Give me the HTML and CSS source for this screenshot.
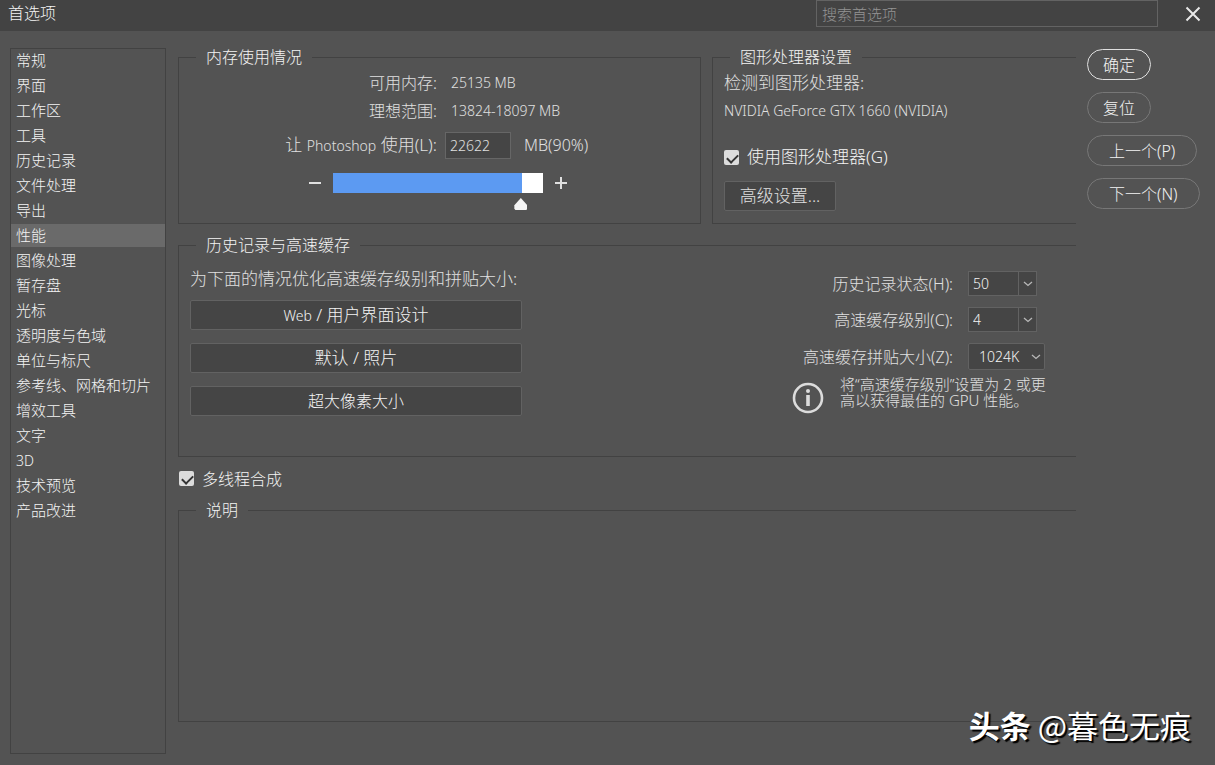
FILE: index.html
```html
<!DOCTYPE html>
<html lang="zh-CN">
<head>
    <meta charset="UTF-8">
    <meta name="viewport" content="width=device-width, initial-scale=1.0">
    <title>首选项</title>
    <link rel="stylesheet" href="styles.css">
</head>
<body>
    <div class="dialog">
        <header class="titlebar">
            <h1>首选项</h1>
            <input class="search" type="search" placeholder="搜索首选项" aria-label="搜索首选项">
            <button class="close" type="button" aria-label="关闭">
                <svg width="16" height="16" viewBox="0 0 16 16"><path d="M1.5 1.5l13 13M14.5 1.5l-13 13" stroke="#e8e8e8" stroke-width="2" fill="none"/></svg>
            </button>
        </header>

        <div class="content">
            <nav class="sidebar">
                <a href="#">常规</a>
                <a href="#">界面</a>
                <a href="#">工作区</a>
                <a href="#">工具</a>
                <a href="#">历史记录</a>
                <a href="#">文件处理</a>
                <a href="#">导出</a>
                <a href="#" class="active">性能</a>
                <a href="#">图像处理</a>
                <a href="#">暂存盘</a>
                <a href="#">光标</a>
                <a href="#">透明度与色域</a>
                <a href="#">单位与标尺</a>
                <a href="#">参考线、网格和切片</a>
                <a href="#">增效工具</a>
                <a href="#">文字</a>
                <a href="#"><span class="latin">3D</span></a>
                <a href="#">技术预览</a>
                <a href="#">产品改进</a>
            </nav>

            <main class="panel">
                <div class="top-row">
                    <fieldset class="group">
                        <legend>内存使用情况</legend>
                        <div class="memory">
                            <span class="label">可用内存:</span>
                            <span class="value">25135 MB</span>
                            <span class="label">理想范围:</span>
                            <span class="value">13824-18097 MB</span>
                            <label class="label wide" for="memory">让 <span class="latin">Photoshop</span> 使用(L):</label>
                            <div class="memory-use">
                                <input class="field" id="memory" type="text" value="22622">
                                <span>MB(90%)</span>
                            </div>
                        </div>
                        <div class="slider-row">
                            <button class="step" type="button" aria-label="减少">
                                <svg width="12" height="12" viewBox="0 0 12 12"><path d="M0 6h12" stroke="#e0e0e0" stroke-width="2"/></svg>
                            </button>
                            <input class="slider" type="range" min="0" max="24576" value="22622" aria-label="内存使用量">
                            <button class="step" type="button" aria-label="增加">
                                <svg width="12" height="12" viewBox="0 0 12 12"><path d="M0 6h12M6 0v12" stroke="#e0e0e0" stroke-width="2"/></svg>
                            </button>
                        </div>
                    </fieldset>

                    <fieldset class="group open">
                        <legend>图形处理器设置</legend>
                        <div class="gpu">
                            <p class="wide">检测到图形处理器:</p>
                            <p class="latin">NVIDIA GeForce GTX 1660 (NVIDIA)</p>
                            <label class="check wide"><input type="checkbox" checked>使用图形处理器(G)</label>
                            <button class="btn btn-advanced" type="button">高级设置...</button>
                        </div>
                    </fieldset>
                </div>

                <fieldset class="group open cache-group">
                    <legend>历史记录与高速缓存</legend>
                    <div class="cache">
                        <div class="presets">
                            <p class="wide">为下面的情况优化高速缓存级别和拼贴大小:</p>
                            <button class="btn" type="button"><span class="latin">Web</span> / 用户界面设计</button>
                            <button class="btn" type="button">默认 / 照片</button>
                            <button class="btn btn-narrow" type="button">超大像素大小</button>
                        </div>
                        <div class="cache-options">
                            <div class="options">
                                <label class="label" for="states">历史记录状态(H):</label>
                                <div class="combo">
                                    <input id="states" type="text" value="50">
                                    <button type="button" aria-label="展开">
                                        <svg width="10" height="6" viewBox="0 0 10 6"><path d="M1 1l4 3.5L9 1" stroke="#b8b8b8" stroke-width="1.3" fill="none"/></svg>
                                    </button>
                                </div>
                                <label class="label" for="levels">高速缓存级别(C):</label>
                                <div class="combo">
                                    <input id="levels" type="text" value="4">
                                    <button type="button" aria-label="展开">
                                        <svg width="10" height="6" viewBox="0 0 10 6"><path d="M1 1l4 3.5L9 1" stroke="#b8b8b8" stroke-width="1.3" fill="none"/></svg>
                                    </button>
                                </div>
                                <label class="label" for="tile">高速缓存拼贴大小(Z):</label>
                                <div class="select">
                                    <select id="tile">
                                        <option>1024K</option>
                                    </select>
                                    <svg width="10" height="6" viewBox="0 0 10 6"><path d="M1 1l4 3.5L9 1" stroke="#b8b8b8" stroke-width="1.3" fill="none"/></svg>
                                </div>
                            </div>
                            <div class="info">
                                <svg width="32" height="32" viewBox="0 0 32 32">
                                    <circle cx="16" cy="16" r="14" fill="none" stroke="#dcdcdc" stroke-width="2.6"/>
                                    <circle cx="16" cy="9" r="2" fill="#dcdcdc"/>
                                    <path d="M16 13v11" stroke="#dcdcdc" stroke-width="3.6"/>
                                </svg>
                                <p>将“高速缓存级别”设置为 2 或更高以获得最佳的 GPU 性能。</p>
                            </div>
                        </div>
                    </div>
                </fieldset>

                <label class="check threads"><input type="checkbox" checked>多线程合成</label>

                <fieldset class="group open description">
                    <legend>说明</legend>
                </fieldset>
            </main>

            <div class="actions">
                <button class="pill primary" type="button">确定</button>
                <button class="pill" type="button">复位</button>
                <button class="pill long" type="button">上一个(P)</button>
                <button class="pill long" type="button">下一个(N)</button>
            </div>
        </div>

        <div class="watermark"><strong>头条</strong> <span>@暮色无痕</span></div>
    </div>
</body>
</html>
```
FILE: styles.css
```css
* {
    margin: 0;
    padding: 0;
    box-sizing: border-box;
}

body {
    font-family: "Noto Sans", "Noto Sans CJK SC", sans-serif;
    font-size: 16px;
    font-weight: 300;
    line-height: 20px;
    color: #f4f4f4;
    background: #535353;
}

button,
input,
select {
    font: inherit;
    color: inherit;
}

svg {
    display: block;
}

.latin {
    font-size: 14px;
}

.wide {
    font-size: 17px;
}

.dialog {
    position: relative;
    display: flex;
    flex-direction: column;
    min-height: 100vh;
}

/* Title bar */
.titlebar {
    display: flex;
    align-items: flex-start;
    height: 31px;
    padding-left: 8px;
    background: #434343;
}

.titlebar h1 {
    flex: 1;
    font-size: 16px;
    font-weight: inherit;
    line-height: 27px;
}

.search {
    width: 342px;
    height: 27px;
    padding: 0 5px;
    font-size: 15px;
    background: #434343;
    border: 1px solid #636363;
    outline: none;
}

.search::placeholder {
    color: #949494;
}

.close {
    display: flex;
    align-items: center;
    justify-content: center;
    width: 57px;
    height: 27px;
    padding-left: 12px;
    background: none;
    border: none;
}

/* Layout */
.content {
    flex: 1;
    display: flex;
}

.sidebar {
    width: 156px;
    margin: 17px 12px 11px 10px;
    border: 1px solid #424242;
    font-size: 15px;
}

.sidebar a {
    display: block;
    height: 23px;
    margin-bottom: 2px;
    padding-left: 5px;
    line-height: 23px;
    color: inherit;
    text-decoration: none;
}

.sidebar a.active {
    background: #6a6a6a;
}

.panel {
    flex: 1;
    display: flex;
    flex-direction: column;
    padding: 16px 0 43px;
}

.top-row {
    display: grid;
    grid-template-columns: 523fr 364fr;
    gap: 11px;
    margin-bottom: 11px;
}

.group {
    min-width: 0;
    min-height: 177px;
    border: 1px solid #424242;
}

.group.open {
    border-right: none;
}

.group legend {
    margin-left: 17px;
    padding: 0 10px;
}

.label {
    color: #e0e0e0;
    text-align: right;
}

/* Memory usage */
.memory {
    display: grid;
    grid-template-columns: 258px 1fr;
    grid-template-rows: 28px 28px 40px;
    column-gap: 8px;
    align-items: center;
    padding-top: 2px;
}

.value {
    padding-left: 6px;
    font-size: 14px;
    color: #e0e0e0;
}

.memory-use {
    display: flex;
    align-items: center;
    gap: 13px;
    color: #e0e0e0;
}

.field {
    width: 66px;
    height: 27px;
    padding: 0 4px;
    font-size: 14px;
    background: #454545;
    border: 1px solid #666;
}

.slider-row {
    display: flex;
    align-items: flex-start;
    gap: 12px;
    padding: 8px 0 0 130px;
}

.step {
    display: flex;
    align-items: center;
    height: 20px;
    background: none;
    border: none;
}

.slider {
    appearance: none;
    width: 210px;
    height: 38px;
    background: none;
}

.slider::-webkit-slider-runnable-track {
    height: 38px;
    background: linear-gradient(to right, #5c9af2 90%, #fff 90%) top / 100% 20px no-repeat;
}

.slider::-webkit-slider-thumb {
    appearance: none;
    width: 13px;
    height: 12px;
    margin-top: 25px;
    background: #f4f4f4;
    clip-path: polygon(50% 0, 100% 60%, 100% 90%, 92% 100%, 8% 100%, 0 90%, 0 60%);
}

/* Graphics processor */
.gpu {
    padding: 2px 0 0 11px;
    color: #e0e0e0;
}

.gpu p {
    line-height: 28px;
}

.check {
    display: flex;
    align-items: center;
    gap: 8px;
    color: #f4f4f4;
}

.check input {
    appearance: none;
    width: 15px;
    height: 15px;
    border-radius: 2px;
    background: #dcdcdc;
}

.check input:checked::before {
    content: '';
    display: block;
    width: 9px;
    height: 5px;
    margin: 4px 0 0 3px;
    border: solid #333;
    border-width: 0 0 2px 2px;
    transform: rotate(-45deg);
}

.gpu .check {
    height: 24px;
    margin: 20px 0 12px;
}

.btn {
    height: 30px;
    font-size: 17px;
    background: #454545;
    border: 1px solid #626262;
    border-radius: 2px;
}

.btn-narrow {
    font-size: 16px;
}

.btn-advanced {
    width: 112px;
}

/* History and cache */
.cache-group {
    min-height: 222px;
}

.cache {
    display: flex;
    justify-content: space-between;
    padding: 10px 0 0 11px;
}

.presets {
    display: flex;
    flex-direction: column;
    gap: 13px;
    width: 332px;
}

.presets p {
    margin-bottom: -6px;
    line-height: 28px;
    white-space: nowrap;
    color: #e0e0e0;
}

.cache-options {
    width: 284px;
}

.options {
    display: grid;
    grid-template-columns: 161px 1fr;
    grid-template-rows: 37px 35px 39px;
    column-gap: 15px;
    align-items: center;
}

.combo {
    display: flex;
    width: 69px;
    height: 25px;
    background: #454545;
    border: 1px solid #626262;
}

.combo input {
    width: 50px;
    padding-left: 4px;
    font-size: 14px;
    background: none;
    border: none;
    border-right: 1px solid #626262;
}

.combo button {
    flex: 1;
    display: flex;
    align-items: center;
    justify-content: center;
    background: none;
    border: none;
}

.select {
    position: relative;
    width: 77px;
}

.select select {
    appearance: none;
    display: block;
    width: 100%;
    height: 27px;
    padding-left: 10px;
    font-size: 14px;
    background: #454545;
    border: 1px solid #626262;
    border-radius: 2px;
}

.select svg {
    position: absolute;
    top: 11px;
    right: 4px;
    pointer-events: none;
}

.info {
    display: flex;
    gap: 16px;
    padding-right: 16px;
    font-size: 15px;
    line-height: 16px;
    color: #e0e0e0;
}

.info svg {
    flex: none;
    margin-top: 6px;
}

.threads {
    height: 43px;
    padding-left: 1px;
}

.description {
    flex: 1;
}

/* Dialog buttons */
.actions {
    display: flex;
    flex-direction: column;
    align-items: flex-start;
    gap: 12px;
    width: 128px;
    margin: 18px 0 0 11px;
}

.pill {
    min-width: 64px;
    height: 31px;
    padding: 0 14px;
    background: none;
    border: 1px solid #777;
    border-radius: 16px;
}

.pill.long {
    padding: 0 21px;
}

.pill.primary {
    border-color: #e0e0e0;
}

.watermark {
    position: absolute;
    right: 24px;
    bottom: 20px;
    font-family: "Noto Sans CJK SC", sans-serif;
    font-size: 31px;
    font-weight: normal;
    line-height: 40px;
    color: #fff;
    text-shadow: 2px 2px 1px #000;
}
```
